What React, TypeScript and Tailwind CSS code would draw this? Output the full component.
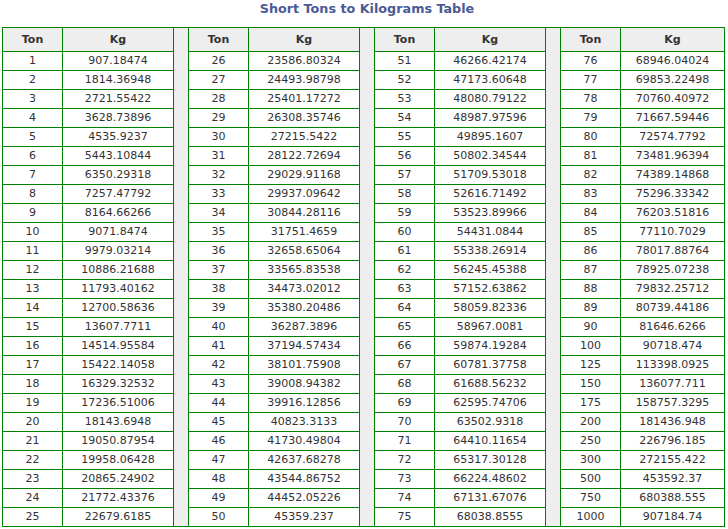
import React from "react";

const cols: [string, string][][] = [
  [
    ["1", "907.18474"], ["2", "1814.36948"], ["3", "2721.55422"], ["4", "3628.73896"], ["5", "4535.9237"],
    ["6", "5443.10844"], ["7", "6350.29318"], ["8", "7257.47792"], ["9", "8164.66266"], ["10", "9071.8474"],
    ["11", "9979.03214"], ["12", "10886.21688"], ["13", "11793.40162"], ["14", "12700.58636"], ["15", "13607.7711"],
    ["16", "14514.95584"], ["17", "15422.14058"], ["18", "16329.32532"], ["19", "17236.51006"], ["20", "18143.6948"],
    ["21", "19050.87954"], ["22", "19958.06428"], ["23", "20865.24902"], ["24", "21772.43376"], ["25", "22679.6185"],
  ],
  [
    ["26", "23586.80324"], ["27", "24493.98798"], ["28", "25401.17272"], ["29", "26308.35746"], ["30", "27215.5422"],
    ["31", "28122.72694"], ["32", "29029.91168"], ["33", "29937.09642"], ["34", "30844.28116"], ["35", "31751.4659"],
    ["36", "32658.65064"], ["37", "33565.83538"], ["38", "34473.02012"], ["39", "35380.20486"], ["40", "36287.3896"],
    ["41", "37194.57434"], ["42", "38101.75908"], ["43", "39008.94382"], ["44", "39916.12856"], ["45", "40823.3133"],
    ["46", "41730.49804"], ["47", "42637.68278"], ["48", "43544.86752"], ["49", "44452.05226"], ["50", "45359.237"],
  ],
  [
    ["51", "46266.42174"], ["52", "47173.60648"], ["53", "48080.79122"], ["54", "48987.97596"], ["55", "49895.1607"],
    ["56", "50802.34544"], ["57", "51709.53018"], ["58", "52616.71492"], ["59", "53523.89966"], ["60", "54431.0844"],
    ["61", "55338.26914"], ["62", "56245.45388"], ["63", "57152.63862"], ["64", "58059.82336"], ["65", "58967.0081"],
    ["66", "59874.19284"], ["67", "60781.37758"], ["68", "61688.56232"], ["69", "62595.74706"], ["70", "63502.9318"],
    ["71", "64410.11654"], ["72", "65317.30128"], ["73", "66224.48602"], ["74", "67131.67076"], ["75", "68038.8555"],
  ],
  [
    ["76", "68946.04024"], ["77", "69853.22498"], ["78", "70760.40972"], ["79", "71667.59446"], ["80", "72574.7792"],
    ["81", "73481.96394"], ["82", "74389.14868"], ["83", "75296.33342"], ["84", "76203.51816"], ["85", "77110.7029"],
    ["86", "78017.88764"], ["87", "78925.07238"], ["88", "79832.25712"], ["89", "80739.44186"], ["90", "81646.6266"],
    ["100", "90718.474"], ["125", "113398.0925"], ["150", "136077.711"], ["175", "158757.3295"], ["200", "181436.948"],
    ["250", "226796.185"], ["300", "272155.422"], ["500", "453592.37"], ["750", "680388.555"], ["1000", "907184.74"],
  ],
];

const cell = "border-r border-b border-[#008000] flex items-center justify-center";

export default function App() {
  const items: React.ReactNode[] = [];
  for (let c = 0; c < 4; c++) {
    items.push(
      <div key={`h-t-${c}`} className={`${cell} bg-[#eeeeee] font-bold pt-[2px]`}>Ton</div>,
      <div key={`h-k-${c}`} className={`${cell} bg-[#eeeeee] font-bold pt-[2px]`}>Kg</div>
    );
  }
  for (let r = 0; r < 25; r++) {
    for (let c = 0; c < 4; c++) {
      const [t, k] = cols[c][r];
      items.push(
        <div key={`t-${r}-${c}`} className={cell}>{t}</div>,
        <div key={`k-${r}-${c}`} className={cell}>{k}</div>
      );
    }
  }
  return (
    <div className="w-[728px] h-[529px] bg-white px-[2px] text-[#333333] [font-family:'DejaVu_Sans',Verdana,sans-serif]">
      <div className="h-[27px] pt-[1px] pl-[6px] text-center text-[12.75px] leading-[16px] font-bold text-[#4a5a96]">
        Short Tons to Kilograms Table
      </div>
      <div className="grid grid-cols-[60px_111px_15px_60px_111px_15px_60px_111px_15px_60px_104px] grid-rows-[24px_repeat(25,19px)] border-l border-t border-[#008000] text-[11px] w-[723px]">
        <div className="col-start-3 [grid-row:1/span_26] bg-[#eeeeee] border-r border-b border-[#008000]" />
        <div className="col-start-6 [grid-row:1/span_26] bg-[#eeeeee] border-r border-b border-[#008000]" />
        <div className="col-start-9 [grid-row:1/span_26] bg-[#eeeeee] border-r border-b border-[#008000]" />
        {items}
      </div>
    </div>
  );
}
